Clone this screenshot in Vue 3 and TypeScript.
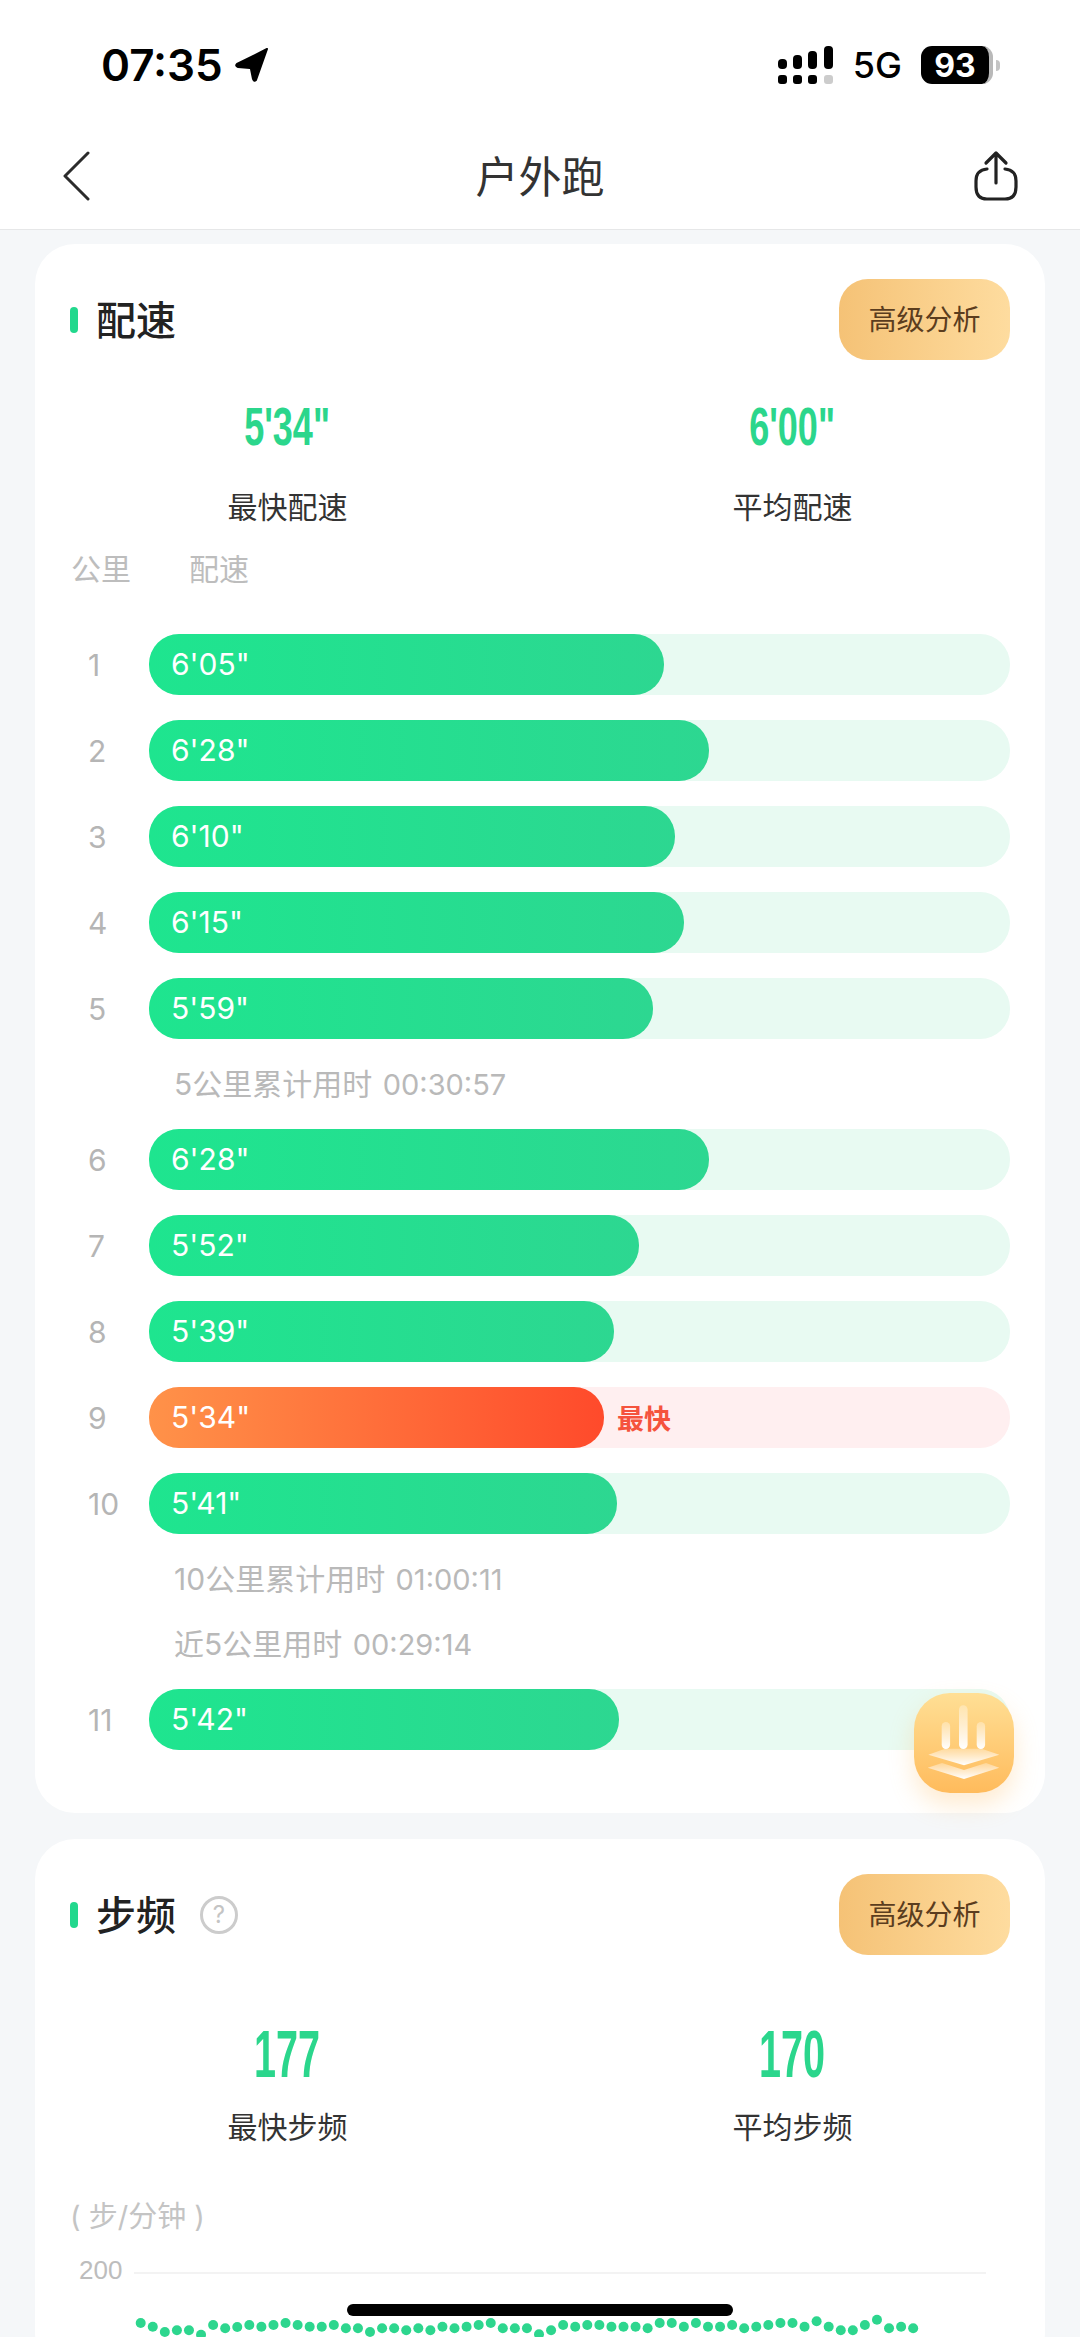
<template>
  <div class="page">
    <header class="top">
      <div class="status">
        <div class="clock">
          <span>07:35</span>
          <svg class="loc" width="36" height="36" viewBox="0 0 36 36">
            <path d="M33 2 L3 17 Q1 19 4 20 L16 21 Q17 21 17 22 L19 32 Q20 35 22 33 Z" fill="#000" stroke="#000" stroke-width="2" stroke-linejoin="round" />
          </svg>
        </div>
        <div class="indicators">
          <div class="signal">
            <div v-for="(h, i) in signalBars" :key="i" class="sig-col">
              <i class="sig-top" :style="{ height: h + 'px' }"></i>
              <i class="sig-dot" :class="{ off: i === 3 }"></i>
            </div>
          </div>
          <span class="net">5G</span>
          <div class="battery"><span>93</span></div>
          <i class="nub"></i>
        </div>
      </div>
      <nav class="nav">
        <svg width="30" height="50" viewBox="0 0 30 50">
          <path d="M26 2 L3 25 L26 48" fill="none" stroke="#2b2b2b" stroke-width="3" stroke-linecap="round" stroke-linejoin="round" />
        </svg>
        <h1>户外跑</h1>
        <svg class="share" width="46" height="52" viewBox="0 0 46 52">
          <path d="M23 33 V3 M13 13 L23 3 L33 13 M14 19 Q3 20 3 31 V37 Q3 49 14 49 H32 Q43 49 43 37 V31 Q43 20 32 19" fill="none" stroke="#222" stroke-width="3.2" stroke-linecap="round" stroke-linejoin="round" />
        </svg>
      </nav>
    </header>

    <main class="content">
      <section class="card pace">
        <div class="card-head">
          <div class="title"><i class="mark"></i><h2>配速</h2></div>
          <button class="adv"><span>高级分析</span></button>
        </div>
        <div class="stats">
          <div class="stat">
            <div class="value"><b>5'34"</b></div>
            <div class="label">最快配速</div>
          </div>
          <div class="stat">
            <div class="value"><b>6'00"</b></div>
            <div class="label">平均配速</div>
          </div>
        </div>
        <div class="cols"><span>公里</span><span>配速</span></div>
        <div class="rows">
          <template v-for="(row, i) in rows" :key="i">
            <div v-if="row.note" class="note">{{ row.note }} <span class="time">{{ row.time }}</span></div>
            <div v-else class="row">
              <span class="km">{{ row.km }}</span>
              <div class="track" :class="{ best: row.best }">
                <div class="fill" :style="{ width: row.end! - 149 + 'px' }">{{ row.pace }}</div>
                <span v-if="row.best" class="best-tag">最快</span>
              </div>
            </div>
          </template>
        </div>
      </section>

      <section class="card cadence">
        <div class="card-head">
          <div class="title">
            <i class="mark"></i><h2>步频</h2>
            <span class="help">?</span>
          </div>
          <button class="adv"><span>高级分析</span></button>
        </div>
        <div class="stats big">
          <div class="stat">
            <div class="value"><b>177</b></div>
            <div class="label">最快步频</div>
          </div>
          <div class="stat">
            <div class="value"><b>170</b></div>
            <div class="label">平均步频</div>
          </div>
        </div>
        <div class="unit">( 步/分钟 )</div>
        <div class="grid-row"><span>200</span><i></i></div>
        <svg class="dots" width="800" height="40" viewBox="0 0 800 40">
          <circle v-for="(y, i) in dotYs" :key="i" :cx="10.7 + i * 12.07" :cy="y / 3" r="5" fill="#2dd68e" />
        </svg>
      </section>
    </main>

    <div class="float-btn">
      <svg width="100" height="100" viewBox="0 0 100 100">
        <defs>
          <linearGradient id="fade" x1="0" y1="0" x2="0" y2="1">
            <stop offset="0" stop-color="#fff" stop-opacity=".3" />
            <stop offset="1" stop-color="#fff" />
          </linearGradient>
        </defs>
        <rect x="27.7" y="29" width="8.4" height="27" rx="4.2" fill="url(#fade)" />
        <rect x="45" y="12.3" width="8.6" height="43.6" rx="4.3" fill="url(#fade)" />
        <rect x="62.7" y="29" width="8.4" height="27" rx="4.2" fill="url(#fade)" />
        <path d="M14.3 61.7 L31 55.7 H67.7 L85.3 61.7 L50 72.3 Z" fill="url(#fade)" />
        <path d="M13.7 74.7 L28 70 L50 77 L72 70 L85.3 74.7 L50 86 Z" fill="url(#fade)" />
      </svg>
    </div>
    <div class="home-bar"></div>
  </div>
</template>

<script setup lang="ts">
type Row = { km?: number; pace?: string; end?: number; best?: boolean; note?: string; time?: string }

const signalBars = [10, 14, 18, 23]

const rows: Row[] = [
  { km: 1, pace: `6'05"`, end: 664 },
  { km: 2, pace: `6'28"`, end: 709 },
  { km: 3, pace: `6'10"`, end: 675 },
  { km: 4, pace: `6'15"`, end: 684 },
  { km: 5, pace: `5'59"`, end: 653 },
  { note: '5公里累计用时', time: '00:30:57' },
  { km: 6, pace: `6'28"`, end: 709 },
  { km: 7, pace: `5'52"`, end: 639 },
  { km: 8, pace: `5'39"`, end: 614 },
  { km: 9, pace: `5'34"`, end: 604, best: true },
  { km: 10, pace: `5'41"`, end: 617 },
  { note: '10公里累计用时', time: '01:00:11' },
  { note: '近5公里用时', time: '00:29:14' },
  { km: 11, pace: `5'42"`, end: 619 },
]

// measured in thirds of a pixel from the top of the svg
const dotYs = [
  78, 89, 105, 100, 100, 113, 84, 94, 90, 84, 89, 84, 78, 84, 89, 89, 84, 94, 94, 105, 94, 94, 100, 94, 100, 89, 94, 89, 84, 78, 94, 94, 94,
  112, 100, 84, 89, 84, 84, 89, 89, 89, 94, 78, 78, 89, 78, 89, 89, 84, 94, 89, 84, 78, 78, 89, 73, 89, 100, 100, 84, 68, 94, 89, 94,
]
</script>

<style scoped>
.page {
  position: relative;
  width: 1080px;
  height: 2337px;
  overflow: hidden;
  background: #f5f7f9;
  font-family: Inter, "Noto Sans CJK SC", sans-serif;
  color: #333;
}

.top {
  background: #fff;
  border-bottom: 1px solid #e6e7e8;
  padding-bottom: 7px;
}
.status {
  height: 130px;
  padding: 0 80px 0 101px;
  display: flex;
  align-items: center;
  justify-content: space-between;
  color: #000;
}
.clock {
  display: flex;
  align-items: center;
  gap: 11px;
  font-size: 44px;
  font-weight: 600;
}
.indicators {
  display: flex;
  align-items: center;
}
.signal {
  display: flex;
  gap: 6.4px;
  margin-right: 20px;
}
.sig-col {
  display: flex;
  flex-direction: column;
  justify-content: flex-end;
  gap: 6px;
  height: 38px;
  width: 9px;
}
.sig-top {
  display: block;
  background: #000;
  border-radius: 4px;
}
.sig-dot {
  display: block;
  height: 9px;
  background: #000;
  border-radius: 3px;
}
.sig-dot.off {
  background: #ccc;
}
.net {
  font-size: 36px;
  font-weight: 500;
  margin-right: 19px;
}
.battery {
  width: 72px;
  height: 38px;
  box-sizing: border-box;
  border-right: 4px solid #b9b9b9;
  border-radius: 11px;
  background: #000;
  color: #fff;
  font-size: 32px;
  font-weight: 700;
  display: flex;
  align-items: center;
  justify-content: center;
}
.nub {
  display: block;
  width: 4px;
  height: 11px;
  margin-left: 3px;
  background: #c4c4c4;
  border-radius: 0 6px 6px 0;
}

.nav {
  height: 92px;
  padding: 0 62px;
  display: grid;
  grid-template-columns: 1fr auto 1fr;
  align-items: center;
}
.nav h1 {
  margin: -5px 0 0;
  font-size: 43px;
  font-weight: 400;
  color: #333;
}
.share {
  justify-self: end;
  margin-right: -1px;
}

.content {
  padding: 14px 35px 0;
  display: flex;
  flex-direction: column;
  gap: 26px;
}
.card {
  background: #fff;
  border-radius: 40px;
  padding: 35px;
}
.pace {
  padding-bottom: 63px;
}
.card-head {
  display: flex;
  align-items: center;
  justify-content: space-between;
  height: 81px;
}
.title {
  display: flex;
  align-items: center;
}
.mark {
  display: block;
  width: 8px;
  height: 26px;
  border-radius: 4px;
  background: #22d88d;
  margin-right: 18px;
}
.title h2 {
  margin: -4px 0 0;
  font-size: 40px;
  font-weight: 500;
  color: #222;
}
.help {
  box-sizing: border-box;
  width: 38px;
  height: 38px;
  margin-left: 24px;
  border: 3px solid #ccc;
  border-radius: 50%;
  color: #c4c4c4;
  font-size: 24px;
  line-height: 32px;
  text-align: center;
}
.adv {
  width: 171px;
  height: 81px;
  border: 0;
  border-radius: 29px;
  padding: 0 0 4px;
  background: linear-gradient(90deg, #f5c276, #fedc9f);
  color: #5b3d1e;
  font-family: inherit;
  font-size: 28px;
}

.stats {
  display: grid;
  grid-template-columns: 1fr 1fr;
  column-gap: 70px;
  margin-top: 37px;
}
.stat {
  text-align: center;
}
.value {
  height: 60px;
  line-height: 60px;
  color: #2bd68c;
}
.value b {
  display: inline-block;
  font-family: "Liberation Sans", sans-serif;
  font-size: 53px;
  font-weight: 700;
  transform: scaleX(0.68);
}
.label {
  height: 40px;
  line-height: 40px;
  margin-top: 30px;
  font-size: 30px;
  color: #333;
}
.big {
  margin-top: 69px;
}
.big .value b {
  font-size: 66px;
  transform: scaleX(0.6);
}
.big .label {
  margin-top: 23px;
}

.cols {
  display: flex;
  gap: 58px;
  margin: 22px 0 45px 1px;
  height: 40px;
  line-height: 40px;
  font-size: 30px;
  color: #bdbdbd;
}
.rows {
  display: flex;
  flex-direction: column;
  gap: 25px;
}
.row {
  display: flex;
  align-items: center;
}
.km {
  width: 61px;
  padding-left: 18px;
  font-size: 30px;
  color: #b5b5b5;
}
.track {
  position: relative;
  flex: 1;
  height: 61px;
  display: flex;
  align-items: center;
  border-radius: 30px;
  background: #e8faf2;
}
.fill {
  box-sizing: border-box;
  height: 61px;
  line-height: 61px;
  padding-left: 22px;
  border-radius: 30px;
  background: linear-gradient(90deg, #1ee58f, #2dd791);
  color: #fff;
  font-size: 30px;
}
.track.best {
  background: #ffeff0;
}
.best .fill {
  background: linear-gradient(90deg, #ff9249, #ff4a2b);
}
.best-tag {
  margin-left: 13px;
  font-size: 27px;
  font-weight: 700;
  color: #f5533d;
}
.note {
  height: 40px;
  line-height: 40px;
  margin-left: 104px;
  font-size: 30px;
  color: #b9b9b9;
}
.time {
  margin-left: 2px;
  font-size: 29px;
}

.unit {
  margin: 50px 0 0;
  height: 40px;
  line-height: 40px;
  font-size: 29px;
  color: #c4c4c4;
}
.grid-row {
  display: flex;
  align-items: center;
  height: 30px;
  margin: 18px 24px 0 9px;
  color: #bdbdbd;
  font-family: "Liberation Sans", sans-serif;
  font-size: 26px;
}
.grid-row i {
  flex: 1;
  height: 2px;
  margin: 6px 0 0 12px;
  background: #f3f3f3;
}
.dots {
  display: block;
  margin: 12px 0 0 60px;
}

.float-btn {
  position: absolute;
  left: 914px;
  top: 1693px;
  width: 100px;
  height: 100px;
  border-radius: 36px;
  background: linear-gradient(180deg, #ffdf95, #ffbb5c);
  box-shadow: 0 12px 24px rgba(255, 190, 100, 0.3);
}
.float-btn svg {
  display: block;
}
.home-bar {
  position: absolute;
  left: 347px;
  top: 2304px;
  width: 386px;
  height: 12px;
  border-radius: 6px;
  background: #000;
}
</style>

<style>
body {
  background: #f5f7f9;
}
</style>
